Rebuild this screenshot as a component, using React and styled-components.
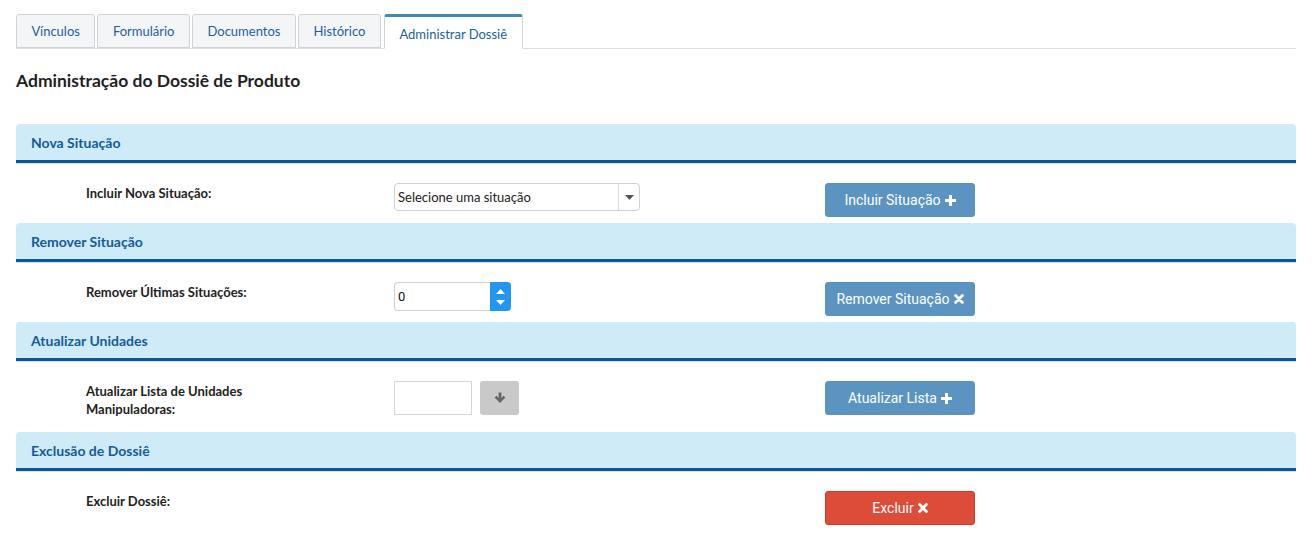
import React from 'react'
import styled, { createGlobalStyle } from 'styled-components'

const GlobalStyle = createGlobalStyle`
  html, body {
    margin: 0;
    padding: 0;
    background: #fff;
  }
  body {
    font-family: Lato, 'Noto Sans', sans-serif;
    color: #222;
  }
  * {
    box-sizing: border-box;
  }
`

const tabs = ['Vínculos', 'Formulário', 'Documentos', 'Histórico', 'Administrar Dossiê']

// fa4-like bold glyphs
const PlusIcon = () => (
  <svg width="11" height="11" viewBox="0 0 11 11">
    <path d="M4 0 H7 V4 H11 V7 H7 V11 H4 V7 H0 V4 H4 Z" fill="#fff" />
  </svg>
)

const RemoveIcon = () => (
  <svg width="10" height="10" viewBox="0 0 10 10">
    <path d="M1.6 1.6 L8.4 8.4 M8.4 1.6 L1.6 8.4" stroke="#fff" strokeWidth="2.8" strokeLinecap="round" />
  </svg>
)

const ArrowDownIcon = () => (
  <svg width="12" height="12" viewBox="0 0 12 12">
    <path d="M4.6 0.5 H7.4 V6 L9.6 3.8 L11.4 5.6 L6 11 L0.6 5.6 L2.4 3.8 L4.6 6 Z" fill="#666" />
  </svg>
)

function App() {
  return (
    <Page>
      <GlobalStyle />
      <TabBar>
        {tabs.map((t, idx) => (
          <Tab key={t} active={idx === tabs.length - 1}>
            {t}
          </Tab>
        ))}
      </TabBar>

      <Title>Administração do Dossiê de Produto</Title>

      <Section>
        <SectionHeader>Nova Situação</SectionHeader>
        <Row>
          <Label>Incluir Nova Situação:</Label>
          <Field>
            <Select>
              <SelectText>Selecione uma situação</SelectText>
              <SelectCaret>
                <svg width="9" height="5" viewBox="0 0 9 5">
                  <path d="M0 0 H9 L4.5 5 Z" fill="#555" />
                </svg>
              </SelectCaret>
            </Select>
          </Field>
          <ActionButton>
            Incluir Situação <PlusIcon />
          </ActionButton>
        </Row>
      </Section>

      <Section>
        <SectionHeader>Remover Situação</SectionHeader>
        <Row>
          <Label>Remover Últimas Situações:</Label>
          <Field>
            <NumberBox>
              <NumberValue>0</NumberValue>
              <Spinner>
                <svg width="9" height="5" viewBox="0 0 9 5">
                  <path d="M0 5 L4.5 0 L9 5 Z" fill="#fff" />
                </svg>
                <svg width="9" height="5" viewBox="0 0 9 5">
                  <path d="M0 0 L4.5 5 L9 0 Z" fill="#fff" />
                </svg>
              </Spinner>
            </NumberBox>
          </Field>
          <ActionButton>
            Remover Situação <RemoveIcon />
          </ActionButton>
        </Row>
      </Section>

      <Section>
        <SectionHeader>Atualizar Unidades</SectionHeader>
        <Row>
          <Label>
            Atualizar Lista de Unidades
            <br />
            Manipuladoras:
          </Label>
          <Field>
            <TextBox />
            <IconButton>
              <ArrowDownIcon />
            </IconButton>
          </Field>
          <ActionButton>
            Atualizar Lista <PlusIcon />
          </ActionButton>
        </Row>
      </Section>

      <Section>
        <SectionHeader>Exclusão de Dossiê</SectionHeader>
        <Row>
          <Label>Excluir Dossiê:</Label>
          <Field />
          <ActionButton danger>
            Excluir <RemoveIcon />
          </ActionButton>
        </Row>
      </Section>
    </Page>
  )
}

const Page = styled.div`
  padding: 14px 19px 0 16px;
  width: 1315px;
`

// Tabs
const TabBar = styled.div`
  display: flex;
  align-items: flex-end;
  gap: 2px;
  height: 35px;
  border-bottom: 1px solid #ddd;
`
const Tab = styled.div`
  display: flex;
  align-items: center;
  justify-content: center;
  height: ${(props) => (props.active ? '35px' : '34px')};
  padding: ${(props) => (props.active ? '3px 14.5px 0' : '0 14.5px')};
  margin-bottom: ${(props) => (props.active ? '-1px' : '0')};
  margin-left: ${(props) => (props.active ? '1px' : '0')};
  background: ${(props) => (props.active ? '#fff' : '#f4f5f7')};
  border: 1px solid #d2d2d2;
  border-top: ${(props) => (props.active ? '3px solid #3c8dbc' : '1px solid #d2d2d2')};
  border-bottom: ${(props) => (props.active ? '1px solid #fff' : '1px solid #d2d2d2')};
  border-radius: 3px 3px 0 0;
  font-size: 13px;
  color: ${(props) => (props.active ? '#22619a' : '#1d5f9e')};
`

const Title = styled.h1`
  margin: 22px 0 33px;
  font-size: 17.5px;
  font-weight: 700;
  line-height: 20px;
  color: #1f1f1f;
`

// Sections
const Section = styled.div`
  display: flex;
  flex-direction: column;
`
const SectionHeader = styled.div`
  display: flex;
  align-items: center;
  height: 39px;
  padding: 0 15px;
  background: #cfebf7;
  border-bottom: 3px solid #0a5996;
  border-radius: 4px 4px 0 0;
  box-shadow: 0 1px 1px rgba(0, 0, 0, 0.15);
  font-size: 14px;
  font-weight: 700;
  color: #165b97;
`
const Row = styled.div`
  display: grid;
  grid-template-columns: 308px 431px 150px;
  align-items: start;
  padding: 20px 0 6px 70px;
`
const Label = styled.div`
  padding-top: 1px;
  margin-bottom: 8px;
  font-size: 13px;
  font-weight: 700;
  line-height: 18px;
  color: #222;
`
const Field = styled.div`
  display: flex;
  gap: 8px;
`

// Inputs
const Select = styled.div`
  display: flex;
  align-items: stretch;
  width: 246px;
  height: 28px;
  border: 1px solid #cfcfcf;
  border-radius: 4px;
  background: #fff;
`
const SelectText = styled.div`
  flex: 1;
  display: flex;
  align-items: center;
  padding-left: 3px;
  font-size: 13px;
  color: #222;
`
const SelectCaret = styled.div`
  display: flex;
  align-items: center;
  justify-content: center;
  width: 21px;
  border-left: 1px solid #d8d8d8;
`
const NumberBox = styled.div`
  display: flex;
  width: 117px;
  height: 29px;
  border: 1px solid #cfcfcf;
  border-right: none;
  border-radius: 4px;
  background: #fff;
`
const NumberValue = styled.div`
  flex: 1;
  display: flex;
  align-items: center;
  padding-left: 3px;
  font-family: Roboto, 'Liberation Sans', sans-serif;
  font-size: 13px;
  color: #111;
`
const Spinner = styled.div`
  display: flex;
  flex-direction: column;
  align-items: center;
  justify-content: center;
  gap: 6px;
  width: 21px;
  margin: -1px 0;
  background: #2196f3;
  border-radius: 0 4px 4px 0;
`
const TextBox = styled.div`
  width: 78px;
  height: 34px;
  border: 1px solid #d0d4dc;
  background: #fff;
`
const IconButton = styled.div`
  display: flex;
  align-items: center;
  justify-content: center;
  width: 39px;
  height: 34px;
  background: #c9c9c9;
  border-radius: 3px;
`

// Buttons
const ActionButton = styled.button`
  display: flex;
  align-items: center;
  justify-content: center;
  gap: 4px;
  width: 150px;
  height: 34px;
  padding: 0;
  border: 1px solid ${(props) => (props.danger ? '#d33a27' : '#5892c0')};
  border-radius: 3px;
  background: ${(props) => (props.danger ? '#dd4b39' : '#5b94c1')};
  font-family: Roboto, 'Liberation Sans', sans-serif;
  font-size: 14px;
  color: #fff;
  cursor: pointer;
`

export default App
